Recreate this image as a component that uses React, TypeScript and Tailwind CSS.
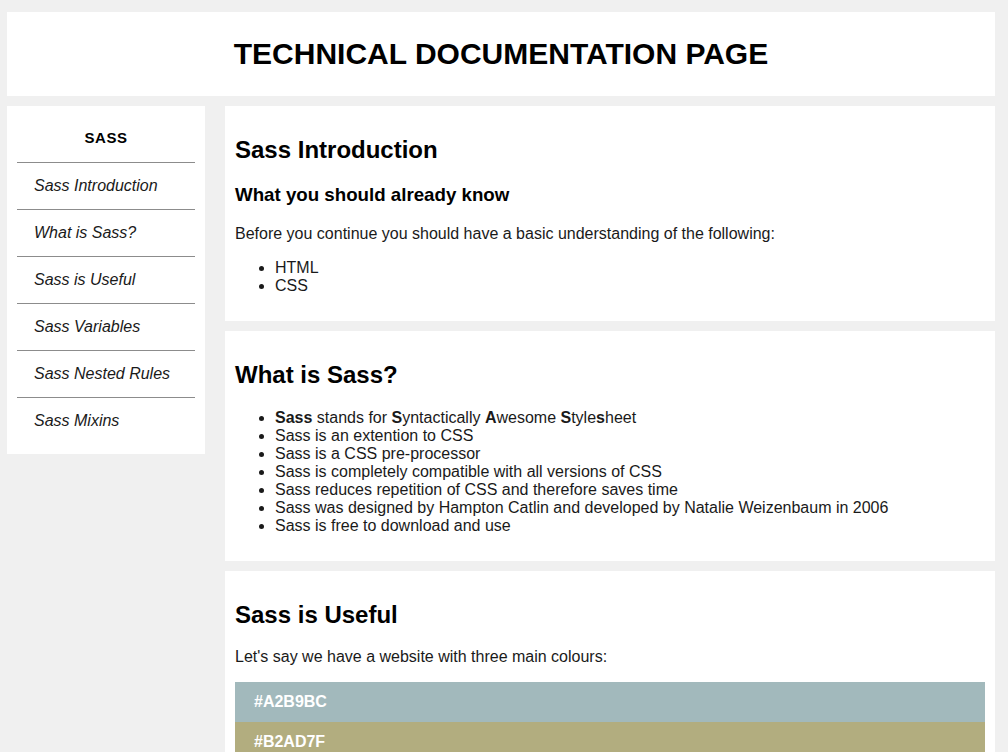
import React from 'react'

const navItems = [
  'Sass Introduction',
  'What is Sass?',
  'Sass is Useful',
  'Sass Variables',
  'Sass Nested Rules',
  'Sass Mixins',
]

const whatIsSass: React.ReactNode[] = [
  <>
    <b>Sass</b> stands for <b>S</b>yntactically <b>A</b>wesome <b>S</b>tyle<b>s</b>heet
  </>,
  'Sass is an extention to CSS',
  'Sass is a CSS pre-processor',
  'Sass is completely compatible with all versions of CSS',
  'Sass reduces repetition of CSS and therefore saves time',
  'Sass was designed by Hampton Catlin and developed by Natalie Weizenbaum in 2006',
  'Sass is free to download and use',
]

const colours = [
  { hex: '#A2B9BC', cls: 'bg-[#a2b9bc]' },
  { hex: '#B2AD7F', cls: 'bg-[#b2ad7f]' },
  { hex: '#878F99', cls: 'bg-[#878f99]' },
]

const Section: React.FC<{ title: string; children: React.ReactNode }> = ({ title, children }) => (
  <section className="bg-white px-[10px] pt-[10px] pb-[10px]">
    <h2 className="mt-[20px] mb-[20px] text-[24px] leading-[27.6px] font-bold text-black">{title}</h2>
    {children}
  </section>
)

export default function App() {
  return (
    <div
      className="min-h-screen bg-[#f0f0f0] pl-[7px] pr-[13px] pt-[12px] text-[16px] leading-[18px] text-[#1a1a1a]"
      style={{ fontFamily: '"Liberation Sans", Arial, sans-serif' }}
    >
      <header className="flex h-[84px] items-center justify-center bg-white">
        <h1 className="text-[30px] font-bold text-black">TECHNICAL DOCUMENTATION PAGE</h1>
      </header>

      <div className="mt-[10px] flex items-start gap-[20px]">
        <nav className="w-[198px] shrink-0 bg-white px-[10px] pb-[10px]">
          <div className="pt-[23px] pb-[15px] text-center text-[15px] font-bold tracking-[0.6px] text-black">SASS</div>
          {navItems.map(item => (
            <a
              key={item}
              href="#"
              className="flex h-[47px] items-center border-t border-[#8c8c8c] pl-[17px] italic text-[#1a1a1a]"
            >
              {item}
            </a>
          ))}
        </nav>

        <main className="flex min-w-0 flex-1 flex-col gap-[10px]">
          <Section title="Sass Introduction">
            <h3 className="mb-[20px] text-[18.72px] leading-[21.5px] font-bold text-black">What you should already know</h3>
            <p className="mb-[16px]">Before you continue you should have a basic understanding of the following:</p>
            <ul className="mb-[16px] list-disc pl-[40px]">
              <li>HTML</li>
              <li>CSS</li>
            </ul>
          </Section>

          <Section title="What is Sass?">
            <ul className="mb-[16px] list-disc pl-[40px]">
              {whatIsSass.map((item, i) => (
                <li key={i}>{item}</li>
              ))}
            </ul>
          </Section>

          <Section title="Sass is Useful">
            <p className="mb-[16px]">Let's say we have a website with three main colours:</p>
            <div className="mb-[16px]">
              {colours.map(c => (
                <div key={c.hex} className={`${c.cls} flex h-[40px] items-center px-[19px] font-bold text-white`}>
                  {c.hex}
                </div>
              ))}
            </div>
          </Section>
        </main>
      </div>
    </div>
  )
}
